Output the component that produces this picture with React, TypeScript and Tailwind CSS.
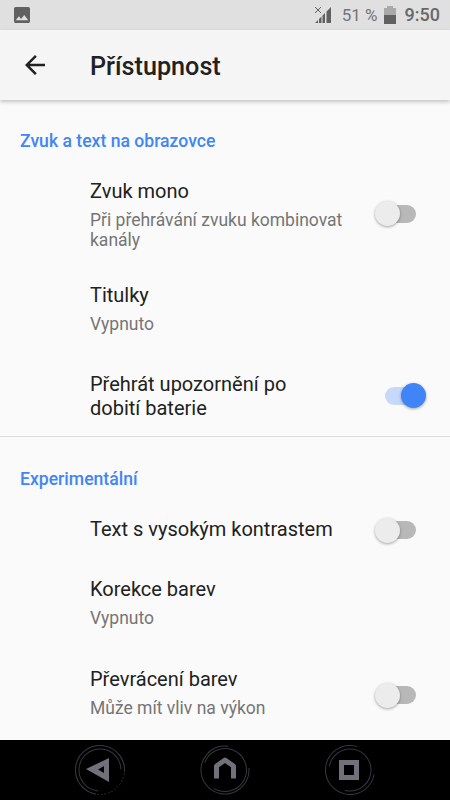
const Toggle = ({ on = false, className = "" }: { on?: boolean; className?: string }) => (
  <div
    className={`relative w-[31px] h-[18px] rounded-full shrink-0 ${on ? "bg-[#c6d9fb]" : "bg-[#b8b8b8]"} ${className}`}
  >
    <div
      className={`absolute top-[-3.5px] w-[25px] h-[25px] rounded-full shadow-[0_1px_3px_rgba(0,0,0,0.35)] ${
        on ? "left-[16px] bg-[#3f85f7]" : "left-[-10px] bg-[#ececec]"
      }`}
    />
  </div>
);

const Row = ({
  title,
  sub,
  on,
  toggle,
  className,
  titleClass = "leading-[24px]",
  toggleClass,
}: {
  title: string;
  sub?: string;
  on?: boolean;
  toggle?: boolean;
  className: string;
  titleClass?: string;
  toggleClass?: string;
}) => (
  <div className={`flex items-center justify-between pl-[90px] pr-[34px] ${className}`}>
    <div className="w-[262px]">
      <div className={`text-[20px] text-[#212121] whitespace-pre-line ${titleClass}`}>{title}</div>
      {sub && <div className="mt-[7px] text-[17.5px] leading-[20px] text-[#757575]">{sub}</div>}
    </div>
    {toggle && <Toggle on={on} className={toggleClass} />}
  </div>
);

const SectionTitle = ({ children, className }: { children: string; className: string }) => (
  <div className={`pl-[20px] text-[17.6px] leading-[24px] font-medium text-[#4285f4] ${className}`}>
    {children}
  </div>
);

const NavBack = () => (
  <svg width="50" height="50" viewBox="0 0 50 50" fill="none">
    <circle cx="25" cy="25" r="24.5" stroke="#34393d" strokeDasharray="112 42" transform="rotate(100 25 25)" />
    <circle cx="25" cy="25" r="24.5" stroke="#34393d" strokeDasharray="1.5 2" pathLength="150" />
    <circle cx="25" cy="25" r="21" stroke="#34393d" strokeDasharray="96 36" transform="rotate(95 25 25)" />
    <path fillRule="evenodd" fill="#71717b" d="M11 24 34 13V37ZM23 24.5 29 21V28Z" />
  </svg>
);

const NavHome = () => (
  <svg width="50" height="50" viewBox="0 0 50 50" fill="none">
    <circle cx="25" cy="25" r="24" stroke="#34393d" strokeDasharray="118 33" transform="rotate(-5 25 25)" />
    <circle cx="25" cy="25" r="21.5" stroke="#34393d" strokeDasharray="105 30" transform="rotate(-160 25 25)" />
    <path d="M16.5 33.5V21L25 15l8.5 6v12.5" stroke="#71717b" strokeWidth="5" strokeLinejoin="round" />
  </svg>
);

const NavRecents = () => (
  <svg width="50" height="50" viewBox="0 0 50 50" fill="none">
    <circle cx="25" cy="25" r="24.5" stroke="#34393d" strokeDasharray="118 36" transform="rotate(10 25 25)" />
    <circle cx="25" cy="25" r="21" stroke="#34393d" strokeDasharray="100 32" transform="rotate(-170 25 25)" />
    <rect x="16.5" y="17.5" width="15" height="15" stroke="#71717b" strokeWidth="5" />
  </svg>
);

export default function App() {
  return (
    <div className="w-[450px] h-[800px] flex flex-col overflow-hidden bg-[#fafafa] font-['Roboto',sans-serif]">
      <div className="h-[30px] shrink-0 bg-[#e0e0e0] flex items-center pl-[14px] pr-[10px]">
        <svg width="16" height="16" viewBox="3 3 18 18" fill="#616161">
          <path d="M21 19V5c0-1.1-.9-2-2-2H5c-1.1 0-2 .9-2 2v14c0 1.1.9 2 2 2h14c1.1 0 2-.9 2-2zM8.5 13.5l2.5 3.01L14.5 12l4.5 6H5l3.5-4.5z" />
        </svg>
        <div className="ml-auto flex items-center">
          <svg width="18" height="18" viewBox="0 0 18 18" fill="#616161">
            <path d="M1 17 4 14V17ZM5 13 7.5 10.5V17H5ZM8.5 9.5 11 7V17H8.5ZM12.5 5.5 17 1V17H12.5Z" />
            <path d="M1 1 7 7M7 1 1 7" stroke="#616161" strokeWidth="1" fill="none" />
          </svg>
          <span className="ml-[10px] text-[17px] leading-[30px] text-[#757575]">51 %</span>
          <div className="ml-[6px] w-[12px] h-[18px] flex flex-col items-center">
            <div className="w-[6px] h-[2px] bg-[#a9a9a9]" />
            <div className="w-[12px] h-[7px] bg-[#a9a9a9]" />
            <div className="w-[12px] h-[9px] bg-[#616161]" />
          </div>
          <span className="ml-[9px] text-[18px] leading-[30px] font-medium text-[#686868]">9:50</span>
        </div>
      </div>

      <div className="relative z-10 h-[70px] shrink-0 bg-[#f5f5f5] shadow-[0_2px_4px_rgba(0,0,0,0.22)] flex items-center pl-[20px]">
        <svg width="30" height="30" viewBox="0 0 24 24" fill="#212121">
          <path d="M20 11H7.83l5.59-5.59L12 4l-8 8 8 8 1.41-1.41L7.83 13H20v-2z" />
        </svg>
        <div className="ml-[40px] mt-[3px] text-[25.2px] leading-[32px] font-medium text-[#212121]">Přístupnost</div>
      </div>

      <div className="flex-1 min-h-0">
        <SectionTitle className="pt-[29px]">Zvuk a text na obrazovce</SectionTitle>
        <Row
          className="pt-[26px]"
          title="Zvuk mono"
          sub="Při přehrávání zvuku kombinovat kanály"
          toggleClass="mt-[-2px]"
          toggle
        />
        <Row className="pt-[33px]" title="Titulky" sub="Vypnuto" />
        <Row
          className="pt-[39px] pb-[16px] border-b border-[#dcdcdc]"
          title={"Přehrát upozornění po\ndobití baterie"}
          titleClass="leading-[23.5px]"
          toggleClass="mt-[-2px]"
          toggle
          on
        />
        <SectionTitle className="pt-[30px]">Experimentální</SectionTitle>
        <Row className="pt-[26px]" title="Text s vysokým kontrastem" toggleClass="mt-[2px]" toggle />
        <Row className="pt-[36px]" title="Korekce barev" sub="Vypnuto" />
        <Row
          className="pt-[39px]"
          title="Převrácení barev"
          sub="Může mít vliv na výkon"
          toggleClass="mt-[5px]"
          toggle
        />
      </div>

      <div className="h-[60px] shrink-0 bg-black flex items-center justify-center gap-[75px]">
        <NavBack />
        <NavHome />
        <NavRecents />
      </div>
    </div>
  );
}
